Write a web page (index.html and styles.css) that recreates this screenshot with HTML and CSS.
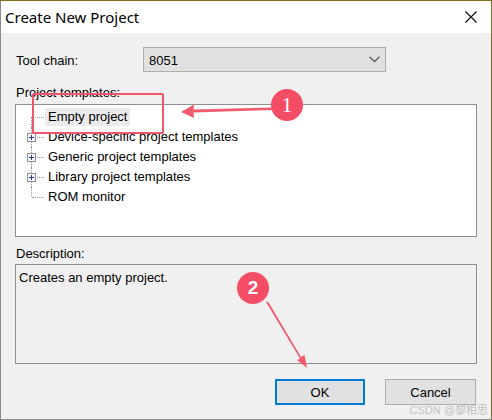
FILE: index.html
```html
<!DOCTYPE html>
<html>
<head>
<meta charset="utf-8">
<link rel="stylesheet" href="styles.css">
</head>
<body>
<div class="window">
  <div class="titlebar">
    <span class="title">Create New Project</span>
    <svg class="close" width="12" height="12" viewBox="0 0 12 12"><path d="M0.5 0.5 L11.5 11.5 M11.5 0.5 L0.5 11.5" stroke="#000" stroke-width="1.1" fill="none"/></svg>
  </div>
  <div class="content">
    <div class="toolrow">
      <span class="label toollabel">Tool chain:</span>
      <div class="combo">
        <span class="combotext">8051</span>
        <svg class="chev" width="11" height="7" viewBox="0 0 11 7"><path d="M0.5 0.8 L5.5 5.5 L10.5 0.8" stroke="#606060" stroke-width="1.3" fill="none"/></svg>
      </div>
    </div>
    <div class="label tplabel">Project templates:</div>
    <div class="tree">
      <div class="node first">
        <div class="gutter"><span class="vline"></span><span class="hline"></span></div>
        <span class="item selected">Empty project</span>
      </div>
      <div class="node">
        <div class="gutter"><span class="vline"></span><span class="hline"></span>
          <svg class="plus" width="9" height="9" viewBox="0 0 9 9"><rect x="0.5" y="0.5" width="8" height="8" fill="#f4f4f4" stroke="#919191"/><path d="M2 4.5 H7 M4.5 2 V7" stroke="#24408a" stroke-width="1"/></svg>
        </div>
        <span class="item">Device-specific project templates</span>
      </div>
      <div class="node">
        <div class="gutter"><span class="vline"></span><span class="hline"></span>
          <svg class="plus" width="9" height="9" viewBox="0 0 9 9"><rect x="0.5" y="0.5" width="8" height="8" fill="#f4f4f4" stroke="#919191"/><path d="M2 4.5 H7 M4.5 2 V7" stroke="#24408a" stroke-width="1"/></svg>
        </div>
        <span class="item">Generic project templates</span>
      </div>
      <div class="node">
        <div class="gutter"><span class="vline"></span><span class="hline"></span>
          <svg class="plus" width="9" height="9" viewBox="0 0 9 9"><rect x="0.5" y="0.5" width="8" height="8" fill="#f4f4f4" stroke="#919191"/><path d="M2 4.5 H7 M4.5 2 V7" stroke="#24408a" stroke-width="1"/></svg>
        </div>
        <span class="item">Library project templates</span>
      </div>
      <div class="node last">
        <div class="gutter"><span class="vline"></span><span class="hline"></span></div>
        <span class="item">ROM monitor</span>
      </div>
    </div>
    <div class="label desclabel">Description:</div>
    <div class="desc">Creates an empty project.</div>
    <div class="buttons">
      <div class="btn default">OK</div>
      <div class="btn">Cancel</div>
    </div>
  </div>

  <div class="redbox"></div>
  <svg class="arrows" width="492" height="420" viewBox="0 0 492 420">
    <polygon points="181,112 194,104.5 193.5,109.5 272,107.5 272,110 193.5,112.5 194,118" fill="#f25a6e"/>
    <polygon points="266,302 268,301.5 301,357 304.5,355 307,368 297,360 300,358.5" fill="#f25a6e"/>
  </svg>
  <div class="badge b1">1</div>
  <div class="badge b2">2</div>
  <div class="watermark">CSDN @黎相思</div>
</div>
</body>
</html>
```

FILE: styles.css
```css
html, body {
  margin: 0;
  padding: 0;
}
body {
  width: 492px;
  height: 420px;
  overflow: hidden;
  font-family: "Liberation Sans", Arial, sans-serif;
  font-size: 13px;
  color: #000;
}
.window {
  position: relative;
  box-sizing: border-box;
  width: 492px;
  height: 420px;
  background: #f0f0f0;
  border-top: 1px solid #7d6f1c;
  border-right: 1px solid #7d6f1c;
  border-left: 1px solid #8a8a8a;
  border-bottom: 1px solid #8a8a8a;
  display: flex;
  flex-direction: column;
}
.titlebar {
  height: 32px;
  background: #fff;
  display: flex;
  align-items: center;
  justify-content: space-between;
  padding: 0 14px 0 4px;
  flex: none;
}
.title {
  font-family: "Noto Sans", "Open Sans", sans-serif;
  font-size: 15px;
  line-height: 20px;
  padding-bottom: 1px;
}
.close {
  display: block;
  margin-top: 0px;
}
.content {
  padding: 0 14px;
  display: flex;
  flex-direction: column;
}
.label {
  line-height: 15px;
  height: 15px;
  white-space: nowrap;
}
.toolrow {
  margin-top: 14px;
  height: 25px;
  display: flex;
  align-items: center;
}
.toollabel {
  width: 127px;
  flex: none;
  padding-left: 1px;
  padding-top: 2px;
}
.combo {
  box-sizing: border-box;
  width: 243px;
  height: 25px;
  border: 1px solid #adadad;
  background: #e1e1e1;
  display: flex;
  align-items: center;
  justify-content: space-between;
  padding: 2px 5px 0 5px;
}
.combotext {
  line-height: 15px;
}
.chev {
  display: block;
  margin-top: -2px;
}
.tplabel {
  margin-top: 13px;
  padding-left: 1px;
}
.tree {
  margin-top: 4px;
  box-sizing: border-box;
  height: 133px;
  background: #fff;
  border: 1px solid #8f8f8f;
  padding-top: 2px;
}
.node {
  height: 20px;
  display: flex;
  align-items: center;
}
.gutter {
  position: relative;
  width: 29px;
  height: 20px;
  flex: none;
}
.vline {
  position: absolute;
  left: 15px;
  top: 0;
  height: 20px;
  border-left: 1px dotted #9a9a9a;
}
.first .vline {
  top: 10px;
  height: 10px;
}
.last .vline {
  height: 10px;
}
.hline {
  position: absolute;
  left: 16px;
  top: 10px;
  width: 12px;
  border-top: 1px dotted #9a9a9a;
}
.plus {
  position: absolute;
  left: 11px;
  top: 6px;
  display: block;
}
.item {
  display: inline-block;
  height: 18px;
  line-height: 18px;
  padding: 0 3px;
  white-space: nowrap;
}
.selected {
  background: #ebebeb;
}
.desclabel {
  margin-top: 9px;
  padding-left: 1px;
}
.desc {
  margin-top: 3px;
  box-sizing: border-box;
  height: 100px;
  border: 1px solid #8f8f8f;
  padding: 5px 3px;
  line-height: 15px;
}
.buttons {
  margin-top: 15px;
  display: flex;
  justify-content: flex-end;
  gap: 20px;
  padding-right: 1px;
}
.btn {
  box-sizing: border-box;
  width: 91px;
  height: 26px;
  border: 1px solid #adadad;
  background: #e1e1e1;
  display: flex;
  align-items: center;
  justify-content: center;
  padding-top: 1px;
}
.btn.default {
  width: 90px;
  border: 2px solid #0078d7;
}
.redbox {
  position: absolute;
  left: 31px;
  top: 92px;
  width: 128px;
  height: 37px;
  border: 2px solid #f2566c;
  border-radius: 2px;
}
.arrows {
  position: absolute;
  left: -1px;
  top: -1px;
  pointer-events: none;
}
.badge {
  position: absolute;
  width: 32px;
  height: 32px;
  border-radius: 50%;
  background: #f44d65;
  color: #fff;
  display: flex;
  align-items: center;
  justify-content: center;
}
.b1 {
  left: 270px;
  top: 88px;
  font-family: "Liberation Serif", "Times New Roman", serif;
  font-size: 22px;
}
.b2 {
  left: 236px;
  top: 271px;
  font-family: "Liberation Sans", Arial, sans-serif;
  font-size: 19px;
  font-weight: bold;
}
.watermark {
  position: absolute;
  right: 3px;
  bottom: 2px;
  font-family: "Liberation Sans", "Noto Sans CJK SC", sans-serif;
  font-size: 11px;
  color: #c4c4c4;
  letter-spacing: 0;
}
```
